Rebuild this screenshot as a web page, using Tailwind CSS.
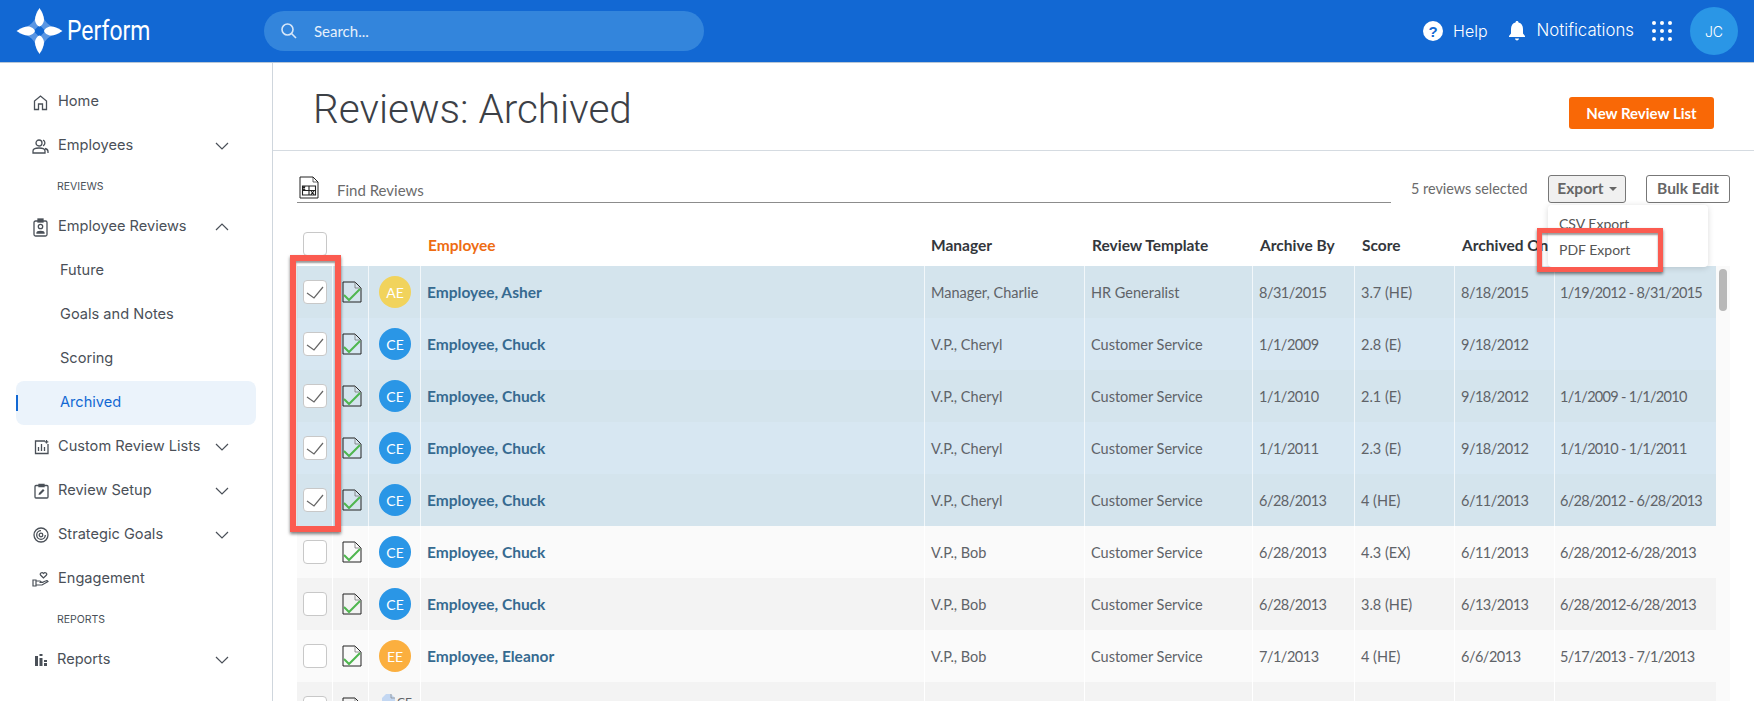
<!DOCTYPE html>
<html>
<head>
<meta charset="utf-8">
<script src="https://cdn.jsdelivr.net/npm/@tailwindcss/browser@4"></script>
</head>
<body class="h-[701px] w-[1754px] overflow-hidden bg-white font-['Lato',sans-serif]">
<header class="flex h-[63px] items-center border-b border-[#b9c7d6] bg-[#1268d3] text-white">
  <div class="flex w-[264px] items-center pl-[16px]">
    <svg width="47" height="46" viewBox="0 0 46 46"><path d="M23 5C24 15 31 22 41 23 31 24 24 31 23 41 22 31 15 24 5 23 15 22 22 15 23 5Z" fill="#5a96e3" stroke="#5a96e3" stroke-width="6" stroke-linejoin="round"/><path d="M23 17 L29 23 L23 29 L17 23 Z" fill="#1268d3"/><path d="M23 0c2.500 4 4.500 8 4.500 11.500S25 18 23 18.500c-2-.5-4.500-3.500-4.500-7S20.500 4 23 0Z M23 46c2.500-4 4.500-8 4.500-11.500S25 28 23 27.500c-2 .5-4.500 3.500-4.500 7S20.500 42 23 46Z M0 23c4-2.500 8-4.500 11.500-4.500S18 21 18.500 23c-.5 2-3.500 4.500-7 4.500S4 25.500 0 23Z M46 23c-4-2.500-8-4.500-11.500-4.500S28 21 27.500 23c.5 2 3.500 4.500 7 4.500S42 25.500 46 23Z" fill="#fff"/></svg>
    <span class="ml-[4px] origin-left scale-x-[0.85] font-['Roboto',sans-serif] text-[27px] leading-none">Perform</span>
  </div>
  <div class="flex h-[40px] w-[440px] items-center rounded-full bg-[#3385dc] pl-[16px] text-[15px] text-[#e6f0fb]">
    <svg width="18" height="18" viewBox="0 0 18 18" fill="none" stroke="#d6e6f8" stroke-width="1.6"><circle cx="7.500" cy="7.500" r="5.500"/><path d="M11.500 11.500 16 16"/></svg>
    <span class="ml-[16px]">Search...</span>
  </div>
  <div class="ml-auto flex items-center pr-[16px]">
    <svg width="20" height="20" viewBox="0 0 20 20"><circle cx="10" cy="10" r="10" fill="#fff"/><text x="10" y="15.500" text-anchor="middle" font-family="Liberation Sans" font-weight="700" font-size="15" fill="#1268d3">?</text></svg>
    <span class="ml-[10px] font-['Inter',sans-serif] text-[16px] font-light">Help</span>
    <svg class="ml-[20px]" width="18" height="20" viewBox="0 0 18 20" fill="#fff"><path d="M9 0c1 0 1.500.7 1.500 1.600C13.500 2.300 15 4.800 15 8v4.500l2 2.500v1H1v-1l2-2.500V8c0-3.200 1.500-5.700 4.500-6.400C7.500.7 8 0 9 0ZM7 17.500h4c0 1-.9 1.900-2 1.900s-2-.9-2-1.900Z"/></svg>
    <span class="ml-[11px] font-['Inter',sans-serif] text-[16.800px] font-light">Notifications</span>
    <div class="ml-[18px] grid grid-cols-3 gap-[4px]">
      <i class="size-[4px] rounded-full bg-white"></i><i class="size-[4px] rounded-full bg-white"></i><i class="size-[4px] rounded-full bg-white"></i>
      <i class="size-[4px] rounded-full bg-white"></i><i class="size-[4px] rounded-full bg-white"></i><i class="size-[4px] rounded-full bg-white"></i>
      <i class="size-[4px] rounded-full bg-white"></i><i class="size-[4px] rounded-full bg-white"></i><i class="size-[4px] rounded-full bg-white"></i>
    </div>
    <div class="ml-[18px] flex size-[48px] items-center justify-center rounded-full bg-[#2a96e6] font-['Inter',sans-serif] text-[14px] font-light">JC</div>
  </div>
</header>
<div class="flex h-[638px]">
  <nav class="w-[273px] shrink-0 border-r border-[#cfd6dd] px-[16px] pt-[17px] font-['Inter',sans-serif] text-[14.600px] text-[#4a5058]">
    <div class="flex h-[44px] items-center pl-[16px]">
      <svg class="mr-[9px]" width="17" height="17" viewBox="0 0 17 17" fill="none" stroke="#4a5058" stroke-width="1.300"><path d="M2.500 15.500V7L8.500 2l6 5v8.500h-4V10h-4v5.500Z"/></svg>Home
    </div>
    <div class="flex h-[44px] items-center pl-[16px]">
      <svg class="mr-[9px]" width="17" height="17" viewBox="0 0 17 17" fill="none" stroke="#4a5058" stroke-width="1.300"><circle cx="7" cy="5" r="3"/><path d="M1 15v-2c0-2 2-3 6-3s6 1 6 3v2ZM11 2.200a3 3 0 0 1 0 5.600M13 10.500c2 .5 3 1.500 3 3V15"/></svg>Employees
      <svg class="ml-auto mr-[26px]" width="16" height="10" viewBox="0 0 16 10" fill="none" stroke="#4a5058" stroke-width="1.200"><path d="M2 2l6 6 6-6"/></svg>
    </div>
    <div class="flex h-[37px] items-center pl-[41px] text-[10.500px]">REVIEWS</div>
    <div class="flex h-[44px] items-center pl-[16px]">
      <svg class="mr-[9px]" width="17" height="19" viewBox="0 0 17 19" fill="none" stroke="#4a5058" stroke-width="1.300"><rect x="2" y="3" width="13" height="15" rx="1.500"/><rect x="6" y="1" width="5" height="3" fill="#4a5058"/><circle cx="8.500" cy="8.500" r="2.200"/><path d="M5 15c0-2 7-2 7 0Z"/></svg>Employee Reviews
      <svg class="ml-auto mr-[26px]" width="16" height="10" viewBox="0 0 16 10" fill="none" stroke="#4a5058" stroke-width="1.200"><path d="M2 8l6-6 6 6"/></svg>
    </div>
    <div class="flex h-[44px] items-center pl-[44px]">Future</div>
    <div class="flex h-[44px] items-center pl-[44px]">Goals and Notes</div>
    <div class="flex h-[44px] items-center pl-[44px]">Scoring</div>
    <div class="relative flex h-[44px] items-center rounded-[8px] bg-[#ebf3fb] pl-[44px] text-[#1268d3]"><span class="absolute left-0 top-[14px] h-[16px] w-[2px] bg-[#1268d3]"></span>Archived</div>
    <div class="flex h-[44px] items-center pl-[18px]">
      <svg class="mr-[9px]" width="15" height="16" viewBox="0 0 15 16" fill="none" stroke="#4a5058" stroke-width="1.300"><path d="M11 2H1.500v12.500H14V5M4.500 12V8M7.500 12V5M10.500 12V8M12.500 1v3.500M10.800 2.800h3.500"/></svg>Custom Review Lists
      <svg class="ml-auto mr-[26px]" width="16" height="10" viewBox="0 0 16 10" fill="none" stroke="#4a5058" stroke-width="1.200"><path d="M2 2l6 6 6-6"/></svg>
    </div>
    <div class="flex h-[44px] items-center pl-[18px]">
      <svg class="mr-[9px]" width="15" height="16" viewBox="0 0 15 16" fill="none" stroke="#4a5058" stroke-width="1.300"><rect x="1" y="2.500" width="13" height="12.500" rx="1"/><path d="M5 1.500h5v2H5Z" fill="#4a5058"/><path d="M4.500 12l.5-2 4-4 1.500 1.500-4 4Z" fill="#4a5058" stroke="none"/></svg>Review Setup
      <svg class="ml-auto mr-[26px]" width="16" height="10" viewBox="0 0 16 10" fill="none" stroke="#4a5058" stroke-width="1.200"><path d="M2 2l6 6 6-6"/></svg>
    </div>
    <div class="flex h-[44px] items-center pl-[17px]">
      <svg class="mr-[9px]" width="16" height="16" viewBox="0 0 16 16" fill="none" stroke="#4a5058" stroke-width="1.300"><circle cx="8" cy="8" r="7"/><path d="M8 3.700A4.300 4.300 0 1 0 12.300 8"/><circle cx="8" cy="8" r="1.800"/></svg>Strategic Goals
      <svg class="ml-auto mr-[26px]" width="16" height="10" viewBox="0 0 16 10" fill="none" stroke="#4a5058" stroke-width="1.200"><path d="M2 2l6 6 6-6"/></svg>
    </div>
    <div class="flex h-[44px] items-center pl-[16px]">
      <svg class="mr-[9px]" width="17" height="16" viewBox="0 0 17 16" fill="none" stroke="#4a5058" stroke-width="1.200"><path d="M1 9h3v6H1ZM4 10h4l2 1.500H7.500M4 14h6l6-3.500c-.6-1-1.500-1-2.500-.5L10 11.500M11.500 7 8.500 4c-1.200-1.500 1.500-3.500 3-1.500 1.500-2 4.200 0 3 1.500Z"/></svg>Engagement
    </div>
    <div class="flex h-[37px] items-center pl-[41px] text-[10.500px]">REPORTS</div>
    <div class="flex h-[44px] items-center pl-[18px]">
      <svg class="mr-[9px]" width="14" height="14" viewBox="0 0 14 14" fill="#4a5058"><path d="M1 3h3v10H1ZM5.500 5h3v8h-3ZM10 7h3v2h-3ZM10 10h3v3h-3ZM5.500 1h3v2h-3Z"/></svg>Reports
      <svg class="ml-auto mr-[26px]" width="16" height="10" viewBox="0 0 16 10" fill="none" stroke="#4a5058" stroke-width="1.200"><path d="M2 2l6 6 6-6"/></svg>
    </div>
  </nav>
  <main class="relative min-w-0 flex-1">
    <div class="flex h-[88px] items-start justify-between border-b border-[#d5dbe1] pl-[40px] pr-[40px]">
      <h1 class="mt-[21px] font-['Roboto',sans-serif] text-[40.500px] leading-[50px] font-light text-[#3c4046]">Reviews: Archived</h1>
      <button class="mt-[34px] h-[32px] w-[145px] rounded-[3px] bg-[#f96806] text-[15px] font-bold text-white">New Review List</button>
    </div>
    <div class="flex h-[71px] items-start pl-[24px] pt-[24px]">
      <div class="flex h-[28px] w-[1094px] shrink-0 items-center border-b border-[#8c8c8c]">
        <svg class="ml-[2px] mb-[3px]" width="20" height="23" viewBox="0 0 20 23" fill="none" stroke="#222" stroke-width="1"><path d="M1 1h13l5 5v16H1Z"/><path d="M14 1v5h5" stroke-width=".7"/><path d="M3.500 10h13v9h-13ZM3.500 14.500h13M10 10v9M4 10.500l2 3.500M6 10.500l-2 3.500M12 15l3 3.500M15 15l-3 3.500" stroke-width="1.100"/></svg>
        <span class="ml-[18px] pt-[3px] text-[15px] text-[#6b6b6b]">Find Reviews</span>
      </div>
      <span class="ml-[20px] flex h-[28px] w-[116px] shrink-0 items-center whitespace-nowrap text-[14.400px] text-[#6b6b6b]">5 reviews selected</span>
      <button class="ml-[21px] flex h-[28px] w-[78px] shrink-0 items-center justify-center rounded-[3px] border border-[#777] bg-[#f0f0f0] text-[15.500px] font-bold text-[#666]">Export<span class="ml-[5px] h-0 w-0 border-x-[4px] border-t-[4px] border-x-transparent border-t-[#666]"></span></button>
      <button class="ml-[20px] h-[28px] w-[84px] shrink-0 rounded-[3px] border border-[#777] text-[15.500px] font-bold text-[#666]">Bulk Edit</button>
    </div>

    <div class="ml-[24px] w-[1419px] text-[14.500px]">
      <div class="flex h-[44px] items-center text-[15.500px] font-bold text-[#33373c]">
        <div class="w-[36px] pl-[6px]"><span class="block size-[24px] rounded-[4px] border border-[#c8c8c8] bg-white"></span></div>
        <div class="w-[88px]"></div>
        <div class="w-[504px] pl-[7px] pt-[3px] text-[#ee6c12]">Employee</div>
        <div class="w-[160px] pl-[6px] pt-[3px]">Manager</div>
        <div class="w-[168px] pl-[7px] pt-[3px]">Review Template</div>
        <div class="w-[102px] pl-[7px] pt-[3px]">Archive By</div>
        <div class="w-[100px] pl-[7px] pt-[3px]">Score</div>
        <div class="w-[100px] whitespace-nowrap pl-[7px] pt-[3px]">Archived On</div>
      </div>
      <div class="flex h-[52px] items-center divide-x divide-[#f2f7fa] bg-[#d4e4ed] text-[#5f6368]">
        <div class="flex h-full w-[36px] items-center pl-[6px]"><span class="flex size-[24px] items-center justify-center rounded-[4px] border border-[#c8c8c8] bg-white"><svg width="18" height="13" viewBox="0 0 18 13" fill="none" stroke="#666" stroke-width="1.200"><path d="M1 7l7 5 9-11"/></svg></span></div>
        <div class="flex h-full w-[36px] items-center pl-[9px]"><svg width="20" height="22" viewBox="0 0 20 22" fill="none"><path d="M1 1h12l6 6v14H1Z" stroke="#222" stroke-width="1"/><path d="M13 1v6h6" stroke="#777" stroke-width=".8"/><path d="M2 14l5 5L18 8" stroke="#4fb64f" stroke-width="2"/></svg></div>
        <div class="flex h-full w-[52px] items-center pl-[10px]"><span class="flex size-[32px] items-center justify-center rounded-full bg-[#f1d35c] text-[14px] text-white">AE</span></div>
        <div class="flex h-full w-[504px] items-center pl-[6px] pt-[2px] text-[15.500px] font-bold text-[#366a90]">Employee, Asher</div>
        <div class="flex h-full w-[160px] items-center pl-[6px] pt-[2px]">Manager, Charlie</div>
        <div class="flex h-full w-[168px] items-center pl-[6px] pt-[2px]">HR Generalist</div>
        <div class="flex h-full w-[102px] items-center pl-[6px] pt-[2px] tracking-[-0.5px]">8/31/2015</div>
        <div class="flex h-full w-[100px] items-center pl-[6px] pt-[2px]">3.7 (HE)</div>
        <div class="flex h-full w-[100px] items-center pl-[6px] pt-[2px] tracking-[-0.5px]">8/18/2015</div>
        <div class="flex h-full w-[161px] items-center whitespace-nowrap pl-[5px] pt-[2px] tracking-[-0.7px]">1/19/2012 - 8/31/2015</div>
      </div>
      <div class="flex h-[52px] items-center divide-x divide-[#f2f7fa] bg-[#d7e7f2] text-[#5f6368]">
        <div class="flex h-full w-[36px] items-center pl-[6px]"><span class="flex size-[24px] items-center justify-center rounded-[4px] border border-[#c8c8c8] bg-white"><svg width="18" height="13" viewBox="0 0 18 13" fill="none" stroke="#666" stroke-width="1.200"><path d="M1 7l7 5 9-11"/></svg></span></div>
        <div class="flex h-full w-[36px] items-center pl-[9px]"><svg width="20" height="22" viewBox="0 0 20 22" fill="none"><path d="M1 1h12l6 6v14H1Z" stroke="#222" stroke-width="1"/><path d="M13 1v6h6" stroke="#777" stroke-width=".8"/><path d="M2 14l5 5L18 8" stroke="#4fb64f" stroke-width="2"/></svg></div>
        <div class="flex h-full w-[52px] items-center pl-[10px]"><span class="flex size-[32px] items-center justify-center rounded-full bg-[#2a96e6] text-[14px] text-white">CE</span></div>
        <div class="flex h-full w-[504px] items-center pl-[6px] pt-[2px] text-[15.500px] font-bold text-[#366a90]">Employee, Chuck</div>
        <div class="flex h-full w-[160px] items-center pl-[6px] pt-[2px]">V.P., Cheryl</div>
        <div class="flex h-full w-[168px] items-center pl-[6px] pt-[2px]">Customer Service</div>
        <div class="flex h-full w-[102px] items-center pl-[6px] pt-[2px] tracking-[-0.5px]">1/1/2009</div>
        <div class="flex h-full w-[100px] items-center pl-[6px] pt-[2px]">2.8 (E)</div>
        <div class="flex h-full w-[100px] items-center pl-[6px] pt-[2px] tracking-[-0.5px]">9/18/2012</div>
        <div class="flex h-full w-[161px] items-center whitespace-nowrap pl-[5px] pt-[2px] tracking-[-0.7px]"></div>
      </div>
      <div class="flex h-[52px] items-center divide-x divide-[#f2f7fa] bg-[#d4e4ed] text-[#5f6368]">
        <div class="flex h-full w-[36px] items-center pl-[6px]"><span class="flex size-[24px] items-center justify-center rounded-[4px] border border-[#c8c8c8] bg-white"><svg width="18" height="13" viewBox="0 0 18 13" fill="none" stroke="#666" stroke-width="1.200"><path d="M1 7l7 5 9-11"/></svg></span></div>
        <div class="flex h-full w-[36px] items-center pl-[9px]"><svg width="20" height="22" viewBox="0 0 20 22" fill="none"><path d="M1 1h12l6 6v14H1Z" stroke="#222" stroke-width="1"/><path d="M13 1v6h6" stroke="#777" stroke-width=".8"/><path d="M2 14l5 5L18 8" stroke="#4fb64f" stroke-width="2"/></svg></div>
        <div class="flex h-full w-[52px] items-center pl-[10px]"><span class="flex size-[32px] items-center justify-center rounded-full bg-[#2a96e6] text-[14px] text-white">CE</span></div>
        <div class="flex h-full w-[504px] items-center pl-[6px] pt-[2px] text-[15.500px] font-bold text-[#366a90]">Employee, Chuck</div>
        <div class="flex h-full w-[160px] items-center pl-[6px] pt-[2px]">V.P., Cheryl</div>
        <div class="flex h-full w-[168px] items-center pl-[6px] pt-[2px]">Customer Service</div>
        <div class="flex h-full w-[102px] items-center pl-[6px] pt-[2px] tracking-[-0.5px]">1/1/2010</div>
        <div class="flex h-full w-[100px] items-center pl-[6px] pt-[2px]">2.1 (E)</div>
        <div class="flex h-full w-[100px] items-center pl-[6px] pt-[2px] tracking-[-0.5px]">9/18/2012</div>
        <div class="flex h-full w-[161px] items-center whitespace-nowrap pl-[5px] pt-[2px] tracking-[-0.7px]">1/1/2009 - 1/1/2010</div>
      </div>
      <div class="flex h-[52px] items-center divide-x divide-[#f2f7fa] bg-[#d7e7f2] text-[#5f6368]">
        <div class="flex h-full w-[36px] items-center pl-[6px]"><span class="flex size-[24px] items-center justify-center rounded-[4px] border border-[#c8c8c8] bg-white"><svg width="18" height="13" viewBox="0 0 18 13" fill="none" stroke="#666" stroke-width="1.200"><path d="M1 7l7 5 9-11"/></svg></span></div>
        <div class="flex h-full w-[36px] items-center pl-[9px]"><svg width="20" height="22" viewBox="0 0 20 22" fill="none"><path d="M1 1h12l6 6v14H1Z" stroke="#222" stroke-width="1"/><path d="M13 1v6h6" stroke="#777" stroke-width=".8"/><path d="M2 14l5 5L18 8" stroke="#4fb64f" stroke-width="2"/></svg></div>
        <div class="flex h-full w-[52px] items-center pl-[10px]"><span class="flex size-[32px] items-center justify-center rounded-full bg-[#2a96e6] text-[14px] text-white">CE</span></div>
        <div class="flex h-full w-[504px] items-center pl-[6px] pt-[2px] text-[15.500px] font-bold text-[#366a90]">Employee, Chuck</div>
        <div class="flex h-full w-[160px] items-center pl-[6px] pt-[2px]">V.P., Cheryl</div>
        <div class="flex h-full w-[168px] items-center pl-[6px] pt-[2px]">Customer Service</div>
        <div class="flex h-full w-[102px] items-center pl-[6px] pt-[2px] tracking-[-0.5px]">1/1/2011</div>
        <div class="flex h-full w-[100px] items-center pl-[6px] pt-[2px]">2.3 (E)</div>
        <div class="flex h-full w-[100px] items-center pl-[6px] pt-[2px] tracking-[-0.5px]">9/18/2012</div>
        <div class="flex h-full w-[161px] items-center whitespace-nowrap pl-[5px] pt-[2px] tracking-[-0.7px]">1/1/2010 - 1/1/2011</div>
      </div>
      <div class="flex h-[52px] items-center divide-x divide-[#f2f7fa] bg-[#d4e4ed] text-[#5f6368]">
        <div class="flex h-full w-[36px] items-center pl-[6px]"><span class="flex size-[24px] items-center justify-center rounded-[4px] border border-[#c8c8c8] bg-white"><svg width="18" height="13" viewBox="0 0 18 13" fill="none" stroke="#666" stroke-width="1.200"><path d="M1 7l7 5 9-11"/></svg></span></div>
        <div class="flex h-full w-[36px] items-center pl-[9px]"><svg width="20" height="22" viewBox="0 0 20 22" fill="none"><path d="M1 1h12l6 6v14H1Z" stroke="#222" stroke-width="1"/><path d="M13 1v6h6" stroke="#777" stroke-width=".8"/><path d="M2 14l5 5L18 8" stroke="#4fb64f" stroke-width="2"/></svg></div>
        <div class="flex h-full w-[52px] items-center pl-[10px]"><span class="flex size-[32px] items-center justify-center rounded-full bg-[#2a96e6] text-[14px] text-white">CE</span></div>
        <div class="flex h-full w-[504px] items-center pl-[6px] pt-[2px] text-[15.500px] font-bold text-[#366a90]">Employee, Chuck</div>
        <div class="flex h-full w-[160px] items-center pl-[6px] pt-[2px]">V.P., Cheryl</div>
        <div class="flex h-full w-[168px] items-center pl-[6px] pt-[2px]">Customer Service</div>
        <div class="flex h-full w-[102px] items-center pl-[6px] pt-[2px] tracking-[-0.5px]">6/28/2013</div>
        <div class="flex h-full w-[100px] items-center pl-[6px] pt-[2px]">4 (HE)</div>
        <div class="flex h-full w-[100px] items-center pl-[6px] pt-[2px] tracking-[-0.5px]">6/11/2013</div>
        <div class="flex h-full w-[161px] items-center whitespace-nowrap pl-[5px] pt-[2px] tracking-[-0.7px]">6/28/2012 - 6/28/2013</div>
      </div>
      <div class="flex h-[52px] items-center divide-x divide-white bg-[#fafafa] text-[#5f6368]">
        <div class="flex h-full w-[36px] items-center pl-[6px]"><span class="block size-[24px] rounded-[4px] border border-[#c8c8c8] bg-white"></span></div>
        <div class="flex h-full w-[36px] items-center pl-[9px]"><svg width="20" height="22" viewBox="0 0 20 22" fill="none"><path d="M1 1h12l6 6v14H1Z" stroke="#222" stroke-width="1"/><path d="M13 1v6h6" stroke="#777" stroke-width=".8"/><path d="M2 14l5 5L18 8" stroke="#4fb64f" stroke-width="2"/></svg></div>
        <div class="flex h-full w-[52px] items-center pl-[10px]"><span class="flex size-[32px] items-center justify-center rounded-full bg-[#2a96e6] text-[14px] text-white">CE</span></div>
        <div class="flex h-full w-[504px] items-center pl-[6px] pt-[2px] text-[15.500px] font-bold text-[#366a90]">Employee, Chuck</div>
        <div class="flex h-full w-[160px] items-center pl-[6px] pt-[2px]">V.P., Bob</div>
        <div class="flex h-full w-[168px] items-center pl-[6px] pt-[2px]">Customer Service</div>
        <div class="flex h-full w-[102px] items-center pl-[6px] pt-[2px] tracking-[-0.5px]">6/28/2013</div>
        <div class="flex h-full w-[100px] items-center pl-[6px] pt-[2px]">4.3 (EX)</div>
        <div class="flex h-full w-[100px] items-center pl-[6px] pt-[2px] tracking-[-0.5px]">6/11/2013</div>
        <div class="flex h-full w-[161px] items-center whitespace-nowrap pl-[5px] pt-[2px] tracking-[-0.7px]">6/28/2012-6/28/2013</div>
      </div>
      <div class="flex h-[52px] items-center divide-x divide-white bg-[#f3f3f3] text-[#5f6368]">
        <div class="flex h-full w-[36px] items-center pl-[6px]"><span class="block size-[24px] rounded-[4px] border border-[#c8c8c8] bg-white"></span></div>
        <div class="flex h-full w-[36px] items-center pl-[9px]"><svg width="20" height="22" viewBox="0 0 20 22" fill="none"><path d="M1 1h12l6 6v14H1Z" stroke="#222" stroke-width="1"/><path d="M13 1v6h6" stroke="#777" stroke-width=".8"/><path d="M2 14l5 5L18 8" stroke="#4fb64f" stroke-width="2"/></svg></div>
        <div class="flex h-full w-[52px] items-center pl-[10px]"><span class="flex size-[32px] items-center justify-center rounded-full bg-[#2a96e6] text-[14px] text-white">CE</span></div>
        <div class="flex h-full w-[504px] items-center pl-[6px] pt-[2px] text-[15.500px] font-bold text-[#366a90]">Employee, Chuck</div>
        <div class="flex h-full w-[160px] items-center pl-[6px] pt-[2px]">V.P., Bob</div>
        <div class="flex h-full w-[168px] items-center pl-[6px] pt-[2px]">Customer Service</div>
        <div class="flex h-full w-[102px] items-center pl-[6px] pt-[2px] tracking-[-0.5px]">6/28/2013</div>
        <div class="flex h-full w-[100px] items-center pl-[6px] pt-[2px]">3.8 (HE)</div>
        <div class="flex h-full w-[100px] items-center pl-[6px] pt-[2px] tracking-[-0.5px]">6/13/2013</div>
        <div class="flex h-full w-[161px] items-center whitespace-nowrap pl-[5px] pt-[2px] tracking-[-0.7px]">6/28/2012-6/28/2013</div>
      </div>
      <div class="flex h-[52px] items-center divide-x divide-white bg-[#fafafa] text-[#5f6368]">
        <div class="flex h-full w-[36px] items-center pl-[6px]"><span class="block size-[24px] rounded-[4px] border border-[#c8c8c8] bg-white"></span></div>
        <div class="flex h-full w-[36px] items-center pl-[9px]"><svg width="20" height="22" viewBox="0 0 20 22" fill="none"><path d="M1 1h12l6 6v14H1Z" stroke="#222" stroke-width="1"/><path d="M13 1v6h6" stroke="#777" stroke-width=".8"/><path d="M2 14l5 5L18 8" stroke="#4fb64f" stroke-width="2"/></svg></div>
        <div class="flex h-full w-[52px] items-center pl-[10px]"><span class="flex size-[32px] items-center justify-center rounded-full bg-[#fbaf3f] text-[14px] text-white">EE</span></div>
        <div class="flex h-full w-[504px] items-center pl-[6px] pt-[2px] text-[15.500px] font-bold text-[#366a90]">Employee, Eleanor</div>
        <div class="flex h-full w-[160px] items-center pl-[6px] pt-[2px]">V.P., Bob</div>
        <div class="flex h-full w-[168px] items-center pl-[6px] pt-[2px]">Customer Service</div>
        <div class="flex h-full w-[102px] items-center pl-[6px] pt-[2px] tracking-[-0.5px]">7/1/2013</div>
        <div class="flex h-full w-[100px] items-center pl-[6px] pt-[2px]">4 (HE)</div>
        <div class="flex h-full w-[100px] items-center pl-[6px] pt-[2px] tracking-[-0.5px]">6/6/2013</div>
        <div class="flex h-full w-[161px] items-center whitespace-nowrap pl-[5px] pt-[2px] tracking-[-0.7px]">5/17/2013 - 7/1/2013</div>
      </div>
      <div class="flex h-[52px] divide-x divide-white bg-[#f3f3f3] text-[#5f6368]">
        <div class="flex h-full w-[36px] items-center pl-[6px]"><span class="block size-[24px] rounded-[4px] border border-[#c8c8c8] bg-white"></span></div>
        <div class="flex h-full w-[36px] items-center pl-[9px]"><svg width="20" height="22" viewBox="0 0 20 22" fill="none"><path d="M1 1h12l6 6v14H1Z" stroke="#222" stroke-width="1"/><path d="M13 1v6h6" stroke="#777" stroke-width=".8"/></svg></div>
        <div class="flex h-full w-[52px] items-start pl-[12px] pt-[11px]"><svg width="15" height="16" viewBox="0 0 15 16"><path d="M1 5l4-4h5l4 4v10H1Z" fill="#c3d7f2"/><path d="M10 1v4h4" fill="none" stroke="#888" stroke-width=".7"/></svg><span class="ml-[1px] text-[12px] leading-[18px]">CE</span></div>
        <div class="h-full w-[504px]"></div>
        <div class="h-full w-[160px]"></div>
        <div class="h-full w-[168px]"></div>
        <div class="h-full w-[102px]"></div>
        <div class="h-full w-[100px]"></div>
        <div class="h-full w-[100px]"></div>
        <div class="h-full w-[161px]"></div>
      </div>
    </div>

    <div class="absolute left-[1443px] top-[203px] h-[435px] w-[14px] bg-[#fafafa] pl-[3px] pt-[3px]"><div class="h-[42px] w-[8px] rounded-full bg-[#b8b8b8]"></div></div>

    <div class="absolute left-[1275px] top-[142px] z-10 h-[62px] w-[160px] rounded-[4px] bg-white pl-[11px] pt-[10px] text-[14px] text-[#555] shadow-[0_1px_6px_rgba(0,0,0,0.15)]">
      <div class="leading-[18px]">CSV Export</div>
      <div class="mt-[8px] leading-[18px]">PDF Export</div>
    </div>
    <div class="absolute left-[1264px] top-[165px] z-20 h-[44px] w-[126px] border-[5px] border-[#fb5b50] shadow-[0_2px_3px_rgba(0,0,0,0.5),inset_0_2px_2px_rgba(0,0,0,0.4)]"></div>
    <div class="absolute left-[17px] top-[192px] z-20 h-[277px] w-[51px] border-[6px] border-[#fb5b50] shadow-[0_2px_3px_rgba(0,0,0,0.5),inset_0_2px_2px_rgba(0,0,0,0.4)]"></div>
  </main>
</div>
</body>
</html>
